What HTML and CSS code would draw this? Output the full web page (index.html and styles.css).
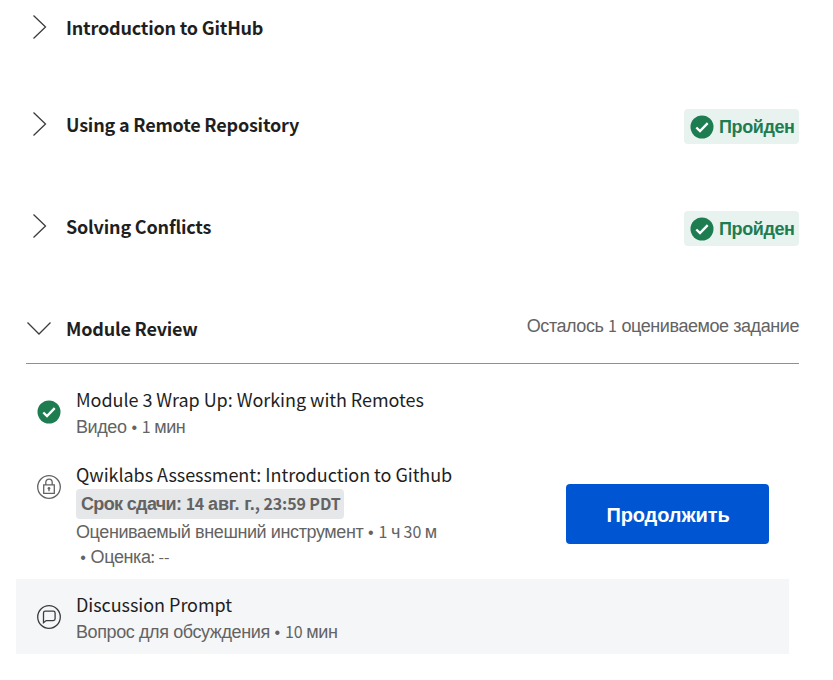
FILE: index.html
```html
<!DOCTYPE html>
<html lang="ru">
<head>
<meta charset="utf-8">
<title>Module Review</title>
<link rel="stylesheet" href="styles.css">
</head>
<body>
<main class="page">
  <section class="module first">
    <svg class="chevron" viewBox="0 0 26 26"><path d="M7.5 1.5 19.5 13 7.5 24.5"/></svg>
    <h2 class="module-title">Introduction to GitHub</h2>
  </section>
  <section class="module">
    <svg class="chevron" viewBox="0 0 26 26"><path d="M7.5 1.5 19.5 13 7.5 24.5"/></svg>
    <h2 class="module-title">Using a Remote Repository</h2>
    <div class="badge">
      <svg class="check" viewBox="0 0 24 24"><circle cx="12" cy="12" r="11.5"/><path d="M6.3 12.5 10 16 17.7 8.2"/></svg>
      <span class="badge-text">Пройден</span>
    </div>
  </section>
  <section class="module">
    <svg class="chevron" viewBox="0 0 26 26"><path d="M7.5 1.5 19.5 13 7.5 24.5"/></svg>
    <h2 class="module-title">Solving Conflicts</h2>
    <div class="badge">
      <svg class="check" viewBox="0 0 24 24"><circle cx="12" cy="12" r="11.5"/><path d="M6.3 12.5 10 16 17.7 8.2"/></svg>
      <span class="badge-text">Пройден</span>
    </div>
  </section>
  <section class="module open">
    <svg class="chevron" viewBox="0 0 26 26"><path d="M1.5 7.500 13 19 24.500 7.500"/></svg>
    <h2 class="module-title">Module Review</h2>
    <div class="remaining">Осталось <span class="lat">1</span> оцениваемое задание</div>
  </section>
  <ul class="items">
    <li class="item video">
      <svg class="check" viewBox="0 0 24 24"><circle cx="12" cy="12" r="11.5"/><path d="M6.3 12.5 10 16 17.7 8.2"/></svg>
      <div class="item-body">
        <div class="item-title">Module 3 Wrap Up: Working with Remotes</div>
        <div class="meta single">Видео<span class="lat"> <span class="bullet">•</span> 1 </span>мин</div>
      </div>
    </li>
    <li class="item lab">
      <svg class="icon" viewBox="0 0 24 24"><circle cx="12" cy="12" r="11.3"/><path d="M6.700 9.800h10.600v8.500H6.700zM8.800 9.800V7.300a3.200 3.200 0 0 1 6.400 0v2.500M12 13.500v2.700"/><circle class="dot" cx="12" cy="13.300" r="1.300"/></svg>
      <div class="item-body">
        <div class="item-title">Qwiklabs Assessment: Introduction to Github</div>
        <div class="deadline">Срок сдачи: <span class="lat day">14</span> <span class="month">авг. г.</span><span class="lat">, 23:59 PDT</span></div>
        <div class="meta">Оцениваемый внешний инструмент<span class="lat"> <span class="bullet">•</span> 1 </span>ч<span class="lat"> 30 </span>м</div>
        <div class="meta grade"><span class="lat"><span class="bullet">•</span> </span>Оценка<span class="lat">: --</span></div>
      </div>
      <button class="continue">Продолжить</button>
    </li>
    <li class="item discussion">
      <svg class="icon dark" viewBox="0 0 24 24"><circle cx="12" cy="12" r="11.300"/><path d="M6.500 17.700V8a1.800 1.800 0 0 1 1.800-1.800h8a1.800 1.800 0 0 1 1.800 1.800v5.800a1.800 1.800 0 0 1-1.800 1.800H9.200z"/></svg>
      <div class="item-body">
        <div class="item-title">Discussion Prompt</div>
        <div class="meta single">Вопрос для обсуждения<span class="lat"> <span class="bullet">•</span> 10 </span>мин</div>
      </div>
    </li>
  </ul>
</main>
</body>
</html>
```
FILE: styles.css
```css
* { box-sizing: border-box; }
body {
  margin: 0;
  background: #fff;
  color: #1f1f1f;
  font-family: "Liberation Sans", sans-serif;
}
.page { width: 833px; padding: 0 34px 0 26px; }
.module {
  display: flex;
  align-items: center;
  height: 54px;
  margin-bottom: 48px;
}
.module.first { margin-bottom: 43px; }
.module.open { height: 63px; padding-bottom: 9px; margin: 0; border-bottom: 1px solid #8f8f8f; }
.chevron {
  width: 26px;
  height: 26px;
  flex: none;
  fill: none;
  stroke: #3c3c3c;
  stroke-width: 1.3;
}
.module-title {
  margin: 0 0 0 14px;
  font: 700 18px/26px "Noto Sans CJK SC", sans-serif;
  letter-spacing: -0.19px;
  white-space: nowrap;
}
.badge {
  display: flex;
  align-items: center;
  gap: 5px;
  width: 115px;
  height: 35px;
  margin: 5px 0 0 auto;
  padding-left: 6px;
  border-radius: 4px;
  background: #e8f3ef;
  color: #1d7c50;
}
.badge-text { padding-top: 2px; font-size: 18px; font-weight: 700; letter-spacing: -0.4px; }
.check { width: 24px; height: 24px; flex: none; fill: #1d7c50; }
.check path { fill: none; stroke: #fff; stroke-width: 2.4; }
.remaining {
  margin-left: auto;
  padding-bottom: 4px;
  color: #636363;
  font-size: 18px;
  line-height: 26px;
  letter-spacing: -0.43px;
  white-space: nowrap;
}
.lat { font-family: "Noto Sans CJK SC", sans-serif; font-size: 16px; line-height: 0; letter-spacing: 0; white-space: pre; }
.bullet { margin: 0 1.2px; font-family: "Liberation Sans", sans-serif; }
.items { list-style: none; margin: 0 -24px 0 -10px; padding: 22px 34px 0 0; }
.item { display: flex; }
.item > .check, .item > .icon { margin: 14px 0 0 21px; }
.item-body { margin-left: 15px; white-space: nowrap; }
.item-title { font: 400 18px/26px "Noto Sans CJK SC", sans-serif; letter-spacing: -0.05px; }
.meta { color: #636363; font-size: 18px; line-height: 26px; height: 25px; letter-spacing: -0.4px; }
.single { padding-top: 2px; }
.video { height: 75px; }
.lab { height: 118px; }
.discussion { width: 773px; height: 75px; padding-top: 12px; background: #f5f6f8; }
.icon {
  width: 24px;
  height: 24px;
  flex: none;
  fill: none;
  stroke: #636363;
  stroke-width: 1.3;
}
.icon.dark { stroke: #3c3c3c; }
.icon .dot { fill: #636363; stroke: none; }
.deadline {
  width: 268px;
  height: 30px;
  margin: 2px 0 0;
  padding-left: 5px;
  border-radius: 4px;
  background: #e5e7e8;
  color: #636363;
  font-size: 18px;
  font-weight: 700;
  line-height: 30px;
  letter-spacing: -0.65px;
}
.deadline .lat { letter-spacing: -0.1px; }
.deadline .day { letter-spacing: -0.5px; }
.month { letter-spacing: -0.1px; }
.grade { padding-left: 3px; }
.continue {
  width: 203px;
  height: 60px;
  margin: 23px 20px 0 auto;
  padding: 2px 0 0 1px;
  border: 0;
  border-radius: 4px;
  background: #0056d2;
  color: #fff;
  font: 700 20px "Liberation Sans", sans-serif;
  letter-spacing: -0.1px;
}
```
